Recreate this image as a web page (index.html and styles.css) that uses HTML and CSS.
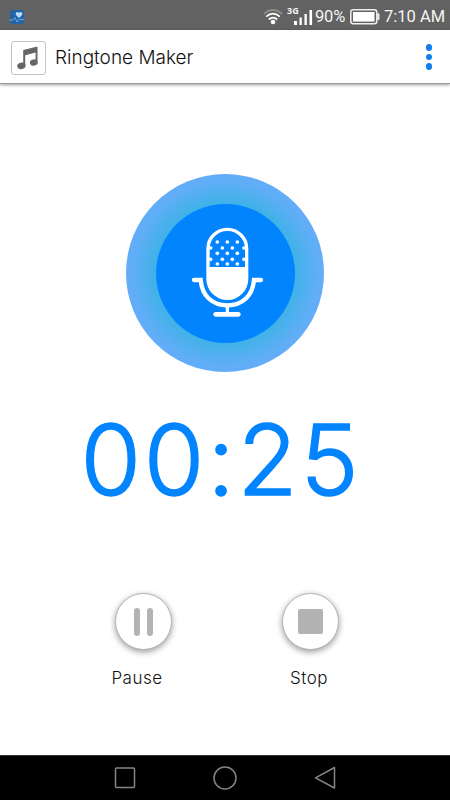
FILE: index.html
```
<!DOCTYPE html>
<html lang="en">
<head>
    <meta charset="UTF-8">
    <meta name="viewport" content="width=device-width, initial-scale=1.0">
    <title>Ringtone Maker</title>
    <link rel="stylesheet" href="styles.css">
</head>
<body>
    <div class="status-bar">
        <svg class="health-icon" width="16" height="16" viewBox="0 0 16 16">
            <rect x="1" y="1" width="14" height="14" rx="3" fill="#2165a8"/>
            <path d="M10 9 L7 6 C5.7 4.2 8.4 1.8 10 4 C11.8 1.8 14.3 4.2 13 6 Z" fill="#c3dcf3"/>
            <path d="M0 11 H4 L6 8.5 L8 13 L10 10.5 H15" fill="none" stroke="#83b5e3" stroke-width="0.8"/>
        </svg>
        <svg class="wifi-icon" width="20" height="16" viewBox="0 0 20 16">
            <g fill="none" stroke="#fff" stroke-width="1.8">
                <path d="M0.8 5 Q10 -3 19.2 5" stroke="#8c8c8c"/>
                <path d="M3.2 7.6 Q10 1.6 16.8 7.6"/>
                <path d="M5.8 10.5 Q10 6.7 14.2 10.5"/>
            </g>
            <circle cx="10" cy="13" r="2.3" fill="#fff"/>
        </svg>
        <span class="network">3G</span>
        <svg class="signal-icon" width="19" height="16" viewBox="0 0 19 16" fill="#fff">
            <rect x="0" y="12" width="3" height="4"/>
            <rect x="5.5" y="8.5" width="2.3" height="7.5"/>
            <rect x="10.5" y="5" width="2.3" height="11"/>
            <rect x="15.5" y="1" width="2.6" height="15"/>
        </svg>
        <span class="percent">90%</span>
        <svg class="battery-icon" width="30" height="16" viewBox="0 0 30 16">
            <rect x="0.8" y="0.8" width="26" height="14" rx="2.5" fill="none" stroke="#eee" stroke-width="1.5"/>
            <rect x="3" y="3" width="21.5" height="9.6" fill="#fff"/>
            <rect x="27.2" y="4.3" width="2.2" height="7" rx="1" fill="#eee"/>
        </svg>
        <span class="time">7:10 AM</span>
    </div>

    <header class="app-bar">
        <div class="app-icon">
            <svg width="22" height="24" viewBox="0 0 22 24">
                <path d="M6.2 4 L20.5 0.5 V16 H18.6 V6.6 L8.2 9.2 V19.5 H6.2 Z" fill="#666"/>
                <ellipse cx="4.4" cy="19.8" rx="4.2" ry="3.2" transform="rotate(-14 4.4 19.8)" fill="#666"/>
                <ellipse cx="16.8" cy="16.6" rx="4" ry="3.1" transform="rotate(-14 16.8 16.6)" fill="#666"/>
            </svg>
        </div>
        <h1>Ringtone Maker</h1>
        <div class="menu">
            <span></span>
            <span></span>
            <span></span>
        </div>
    </header>

    <main class="recorder">
        <div class="record-ring">
            <div class="record-disc">
                <svg width="95" height="105" viewBox="0 0 285 315">
                    <path d="M84 138 V83 A58 58 0 0 1 200 83 V138" fill="none" stroke="#fff" stroke-width="10"/>
                    <path d="M79 138 H205 V174 A63 63 0 0 1 79 174 Z" fill="#fff"/>
                    <g fill="#fff">
                        <circle cx="112" cy="63" r="5.5"/>
                        <circle cx="142" cy="63" r="5.5"/>
                        <circle cx="172" cy="63" r="5.5"/>
                        <circle cx="92" cy="81" r="5.5"/>
                        <circle cx="127" cy="81" r="5.5"/>
                        <circle cx="157" cy="81" r="5.5"/>
                        <circle cx="192" cy="81" r="5.5"/>
                        <circle cx="112" cy="97" r="5.5"/>
                        <circle cx="142" cy="97" r="5.5"/>
                        <circle cx="172" cy="97" r="5.5"/>
                        <circle cx="92" cy="115" r="5.5"/>
                        <circle cx="127" cy="115" r="5.5"/>
                        <circle cx="157" cy="115" r="5.5"/>
                        <circle cx="192" cy="115" r="5.5"/>
                        <circle cx="112" cy="129" r="5.5"/>
                        <circle cx="142" cy="129" r="5.5"/>
                        <circle cx="172" cy="129" r="5.5"/>
                    </g>
                    <g fill="none" stroke="#fff" stroke-linecap="round">
                        <path d="M42 177 H62 C66 224 96 253 142 253 S218 224 222 177 H243" stroke-width="13"/>
                        <path d="M142 254 V276" stroke-width="10"/>
                        <path d="M107 280 H175" stroke-width="14"/>
                    </g>
                </svg>
            </div>
        </div>

        <div class="timer">00:25</div>

        <div class="controls">
            <div class="control">
                <div class="round-button pause"><span></span><span></span></div>
                <div class="label">Pause</div>
            </div>
            <div class="control">
                <div class="round-button stop"><span></span></div>
                <div class="label">Stop</div>
            </div>
        </div>
    </main>

    <nav class="nav-bar">
        <svg width="24" height="24" viewBox="0 0 24 24"><rect x="2.5" y="2" width="19" height="19.5" rx="1"/></svg>
        <svg width="24" height="24" viewBox="0 0 24 24"><circle cx="12" cy="12" r="11"/></svg>
        <svg width="24" height="24" viewBox="0 0 24 24"><path d="M21.5 1.5 V22 L2.5 11.8 Z"/></svg>
    </nav>
</body>
</html>
```

FILE: styles.css
```
* {
    box-sizing: border-box;
}
body {
    margin: 0;
    width: 450px;
    height: 800px;
    display: flex;
    flex-direction: column;
    background-color: #fff;
    font-family: Inter, "Liberation Sans", sans-serif;
    font-weight: 300;
    overflow: hidden;
}
svg {
    display: block;
    flex: none;
}
.status-bar {
    display: flex;
    align-items: center;
    height: 30px;
    padding: 3px 4px 0 9px;
    background-color: #626262;
    color: #f4f4f4;
    font-family: Roboto, sans-serif;
    font-size: 16.5px;
    font-weight: 400;
    white-space: nowrap;
}
.wifi-icon {
    margin-left: auto;
}
.network {
    width: 12px;
    margin-left: 4px;
    margin-bottom: 12px;
    font-family: "Open Sans", sans-serif;
    font-size: 9px;
    font-weight: 700;
    line-height: 10px;
}
.signal-icon {
    margin-left: -5px;
}
.percent {
    width: 32px;
    margin-left: 2px;
    letter-spacing: -0.2px;
}
.battery-icon {
    margin-left: 3px;
}
.time {
    width: 62px;
    margin-left: 4px;
}
.app-bar {
    display: flex;
    align-items: center;
    height: 54px;
    padding: 2px 17px 0 11px;
    border-bottom: 1px solid #9a9a9a;
    box-shadow: 0 1px 3px rgba(0, 0, 0, 0.4);
}
.app-icon {
    display: flex;
    align-items: center;
    justify-content: center;
    width: 35px;
    height: 34px;
    padding-right: 1px;
    border: 1px solid #c4c4c4;
    border-radius: 3px;
}
h1 {
    margin: 0 0 0 9px;
    color: #111;
    font-size: 19px;
    font-weight: 300;
}
.menu {
    display: flex;
    flex-direction: column;
    gap: 3px;
    margin-left: auto;
    margin-right: 1px;
    margin-bottom: 1px;
}
.menu span {
    width: 6.5px;
    height: 6.5px;
    border-radius: 50%;
    background-color: #147ee8;
}
.recorder {
    flex: 1;
    display: flex;
    flex-direction: column;
    align-items: center;
    padding-top: 90px;
}
.record-ring {
    display: flex;
    align-items: center;
    justify-content: center;
    width: 198px;
    height: 198px;
    border-radius: 50%;
    background: radial-gradient(circle, #40b2e8 70px, #62adf8 94px);
}
.record-disc {
    display: flex;
    align-items: center;
    justify-content: center;
    width: 139px;
    height: 139px;
    padding-left: 5px;
    border-radius: 50%;
    background-color: #0284ff;
}
.timer {
    height: 120px;
    margin-top: 28px;
    margin-left: -8px;
    color: #0284ff;
    font-size: 98px;
    line-height: 120px;
    letter-spacing: 2.8px;
    -webkit-text-stroke: 1.4px #0284ff;
}
.controls {
    display: flex;
    justify-content: center;
    gap: 87px;
    margin-top: 73px;
    margin-left: 4px;
}
.control {
    width: 80px;
    display: flex;
    flex-direction: column;
    align-items: center;
}
.round-button {
    display: flex;
    align-items: center;
    justify-content: center;
    width: 57px;
    height: 57px;
    border: 1px solid #b5b5b5;
    border-radius: 50%;
    background-color: #fff;
    box-shadow: 0 2px 6px rgba(0, 0, 0, 0.4);
}
.pause {
    gap: 7px;
}
.pause span {
    width: 6px;
    height: 28px;
    border-radius: 3px;
    background-color: #b3b3b3;
}
.stop span {
    width: 25px;
    height: 25px;
    border-radius: 2px;
    background-color: #b3b3b3;
}
.label {
    margin-top: 17px;
    margin-right: 13px;
    color: #111;
    font-size: 17px;
    line-height: 22px;
    letter-spacing: 0.5px;
}
.stop + .label {
    margin-right: 3px;
}
.nav-bar {
    display: flex;
    align-items: center;
    justify-content: center;
    gap: 76px;
    height: 45px;
    border-top: 1px solid #333;
    background-color: #000;
}
.nav-bar svg {
    fill: none;
    stroke: #858585;
    stroke-width: 1.5;
    stroke-linejoin: round;
}
```
